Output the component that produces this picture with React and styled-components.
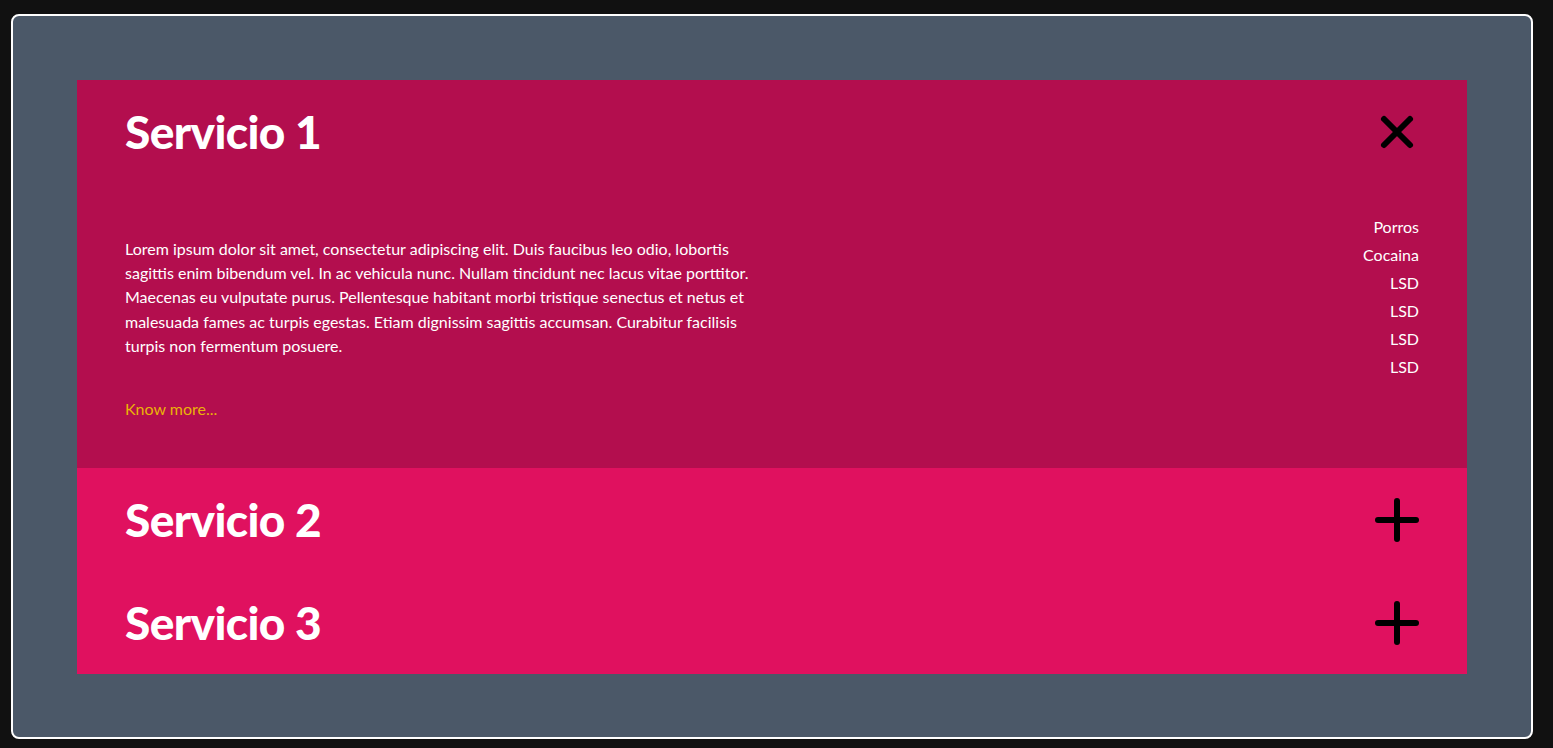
import styled, { createGlobalStyle } from 'styled-components';

const GlobalStyle = createGlobalStyle`
  html, body {
    margin: 0;
    background: #111111;
  }
  body {
    padding: 14px 20px 0 11px;
    font-family: Lato, "Noto Sans", sans-serif;
  }
`;

const Frame = styled.div`
  border: 2px solid #ffffff;
  border-radius: 8px;
  background: #4b5868;
  padding: 64px;
  height: 725px;
  box-sizing: border-box;
`;

const Accordion = styled.div`
  display: flex;
  flex-direction: column;
`;

const Item = styled.section`
  background: ${(p) => (p.$open ? '#b30e4e' : '#e0115f')};
`;

const Header = styled.div`
  display: flex;
  align-items: center;
  justify-content: space-between;
  height: 103px;
  padding: 0 48px;
  cursor: pointer;
`;

const Title = styled.h2`
  margin: 0;
  color: #ffffff;
  font-size: 46px;
  font-weight: 900;
  letter-spacing: -0.6px;
`;

const Content = styled.div`
  display: flex;
  justify-content: space-between;
  align-items: flex-start;
  padding: 30px 48px 47px;
`;

const TextColumn = styled.div`
  width: 632px;
  padding-top: 24px;
`;

const Paragraph = styled.p`
  margin: 0;
  color: #ffffff;
  font-size: 16px;
  line-height: 24.2px;
`;

const MoreLink = styled.a`
  display: block;
  margin-top: 39px;
  color: #eab308;
  font-size: 16px;
  line-height: 24px;
  text-decoration: none;
`;

const List = styled.ul`
  margin: 0;
  padding: 0;
  list-style: none;
  text-align: right;
  color: #ffffff;
  font-size: 16px;
  line-height: 28px;
`;

const Icon = ({ open }) => (
  <svg width="44" height="44" viewBox="0 0 44 44" fill="none" stroke="#000" strokeWidth="6" strokeLinecap="round">
    {open ? (
      <>
        <line x1="9" y1="9" x2="35" y2="35" />
        <line x1="35" y1="9" x2="9" y2="35" />
      </>
    ) : (
      <>
        <line x1="22" y1="3" x2="22" y2="41" />
        <line x1="3" y1="22" x2="41" y2="22" />
      </>
    )}
  </svg>
);

const items = [
  { title: 'Servicio 1', open: true },
  { title: 'Servicio 2', open: false },
  { title: 'Servicio 3', open: false },
];

const tags = ['Porros', 'Cocaina', 'LSD', 'LSD', 'LSD', 'LSD'];

const App = () => {
  return (
    <>
      <GlobalStyle />
      <Frame>
        <Accordion>
          {items.map((item, index) => (
            <Item key={index} $open={item.open}>
              <Header>
                <Title>{item.title}</Title>
                <Icon open={item.open} />
              </Header>
              {item.open && (
                <Content>
                  <TextColumn>
                    <Paragraph>
                      Lorem ipsum dolor sit amet, consectetur adipiscing elit. Duis faucibus leo odio, lobortis
                      sagittis enim bibendum vel. In ac vehicula nunc. Nullam tincidunt nec lacus vitae porttitor.
                      Maecenas eu vulputate purus. Pellentesque habitant morbi tristique senectus et netus et
                      malesuada fames ac turpis egestas. Etiam dignissim sagittis accumsan. Curabitur facilisis
                      turpis non fermentum posuere.
                    </Paragraph>
                    <MoreLink href="#">Know more...</MoreLink>
                  </TextColumn>
                  <List>
                    {tags.map((tag, i) => (
                      <li key={i}>{tag}</li>
                    ))}
                  </List>
                </Content>
              )}
            </Item>
          ))}
        </Accordion>
      </Frame>
    </>
  );
};

export default App;
